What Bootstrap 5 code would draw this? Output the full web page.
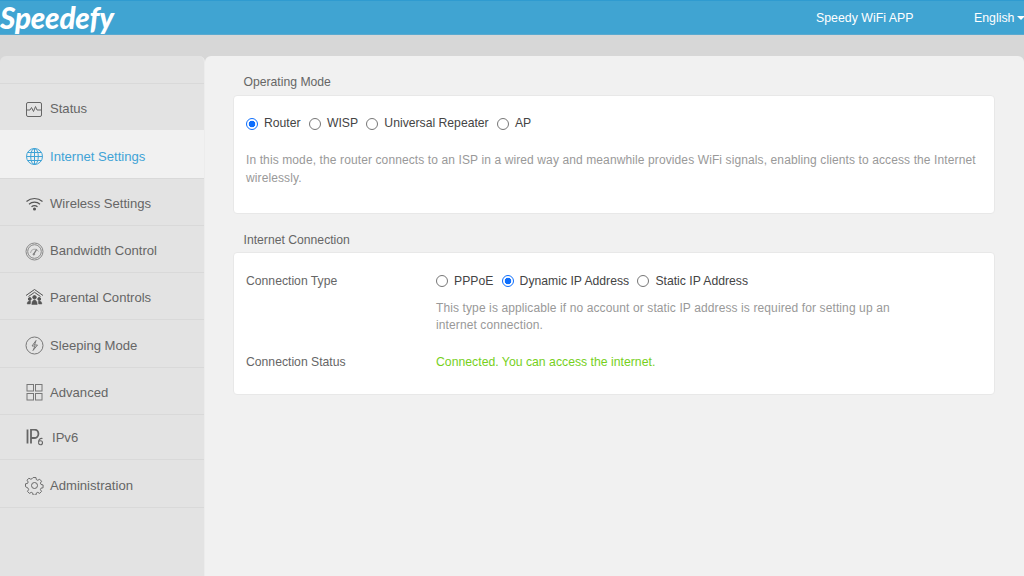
<!DOCTYPE html>
<html lang="en">
<head>
<meta charset="utf-8">
<title>Speedefy</title>
<link href="https://cdn.jsdelivr.net/npm/bootstrap@5.3.0/dist/css/bootstrap.min.css" rel="stylesheet">
<style>
html,body{height:100%;}
body{margin:0;background:#d7d7d7;font-family:"Liberation Sans",Arial,sans-serif;font-size:13px;color:#666;overflow:hidden;}
.top-bar{height:35px;background:#40a4d2;border-top:1px solid #2f9bd0;border-bottom:1px solid #5aa9cf;color:#fff;}
.brand-logo{font-family:"Lato",sans-serif;font-weight:900;font-style:italic;font-size:29.6px;line-height:33px;letter-spacing:-.2px;color:#fff;}
.app-link{width:97px;margin-right:61px;font-size:12.35px;white-space:nowrap;padding-top:1px;}
.lang-link{width:50px;font-size:12.35px;white-space:nowrap;padding-top:1px;}
.lang-caret{display:inline-block;border-left:4px solid transparent;border-right:4px solid transparent;border-top:4px solid #fff;vertical-align:2px;margin-left:2px;}
.page-body{height:541px;padding-top:21px;}
.side-panel{width:205px;background:#e3e3e3;border-right:1px solid #ececec;border-radius:6px 6px 0 0;padding-top:27px;flex:none;}
.side-item{height:47.3px;display:flex;align-items:center;padding-left:25px;padding-top:4px;border-top:1px solid #d9d9d9;color:#666;font-size:13.1px;text-decoration:none;box-sizing:border-box;}
.side-item:last-child{border-bottom:1px solid #d9d9d9;height:48.5px;}
.side-item.active-item{background:#f1f1f1;color:#3fa3d6;border-top-color:#f1f1f1;}
.side-item.tight-item{padding-top:3px;}
.side-item svg{width:19px;height:19px;flex:none;margin-right:6px;}
.side-item.short-item{height:45px;padding-top:2px;}
.main-panel{background:#f1f1f1;border-radius:6px 6px 0 0;padding:0 29px 0 28px;}
.sect-title{height:39px;padding:19px 0 0 10.5px;line-height:15px;color:#666;font-size:12.2px;}
.sect-title.second{height:38px;padding-top:18.5px;}
.white-box{background:#fff;border:1px solid #e8e8e8;border-radius:4px;padding:0 12px;}
.box-a{height:119px;padding-top:19px;}
.box-b{height:143px;padding-top:19px;}
.opt-row{height:17px;color:#444;font-size:12.2px;}
.box-b .opt-row{padding-top:1px;}
.opt-row .form-check-input{width:12px;height:12px;margin:0 6px 0 0;border:1px solid #767676;flex:none;}
.opt-row .form-check-input:checked{background:radial-gradient(circle,#0d6efd 0 3px,#fff 3.6px);border-color:#0d6efd;}
.opt-row label{margin-right:8.3px;white-space:nowrap;}
.note-text{color:#999;font-size:12px;line-height:17.3px;letter-spacing:.11px;}
.box-a .note-text{margin-top:20px;line-height:17.6px;}
.field-name{width:190px;flex:none;color:#666;font-size:12.2px;}
.field-value{width:470px;}
.conn-note{margin-top:10.5px;}
.status-row{margin-top:19px;}
.ok-text{color:#76d01c;font-size:12.25px;}
</style>
</head>
<body>
<div class="top-bar d-flex align-items-center">
  <div class="brand-logo flex-grow-1">Speedefy</div>
  <div class="app-link">Speedy WiFi APP</div>
  <div class="lang-link">English<span class="lang-caret"></span></div>
</div>
<div class="page-body d-flex">
  <nav class="side-panel">
    <a class="side-item" href="#"><svg viewBox="0 0 19 19" fill="none" stroke="#666" stroke-width="1"><rect x="1.5" y="2.5" width="15" height="14" rx="1.5"/><path d="M2 10h3l1.5-2.5 2 4 2-5 1.5 3.500H16"/></svg>Status</a>
    <a class="side-item active-item" href="#"><svg viewBox="0 0 19 19" fill="none" stroke="#3fa3d6" stroke-width="1"><circle cx="9.500" cy="9.500" r="8"/><ellipse cx="9.500" cy="9.500" rx="3.800" ry="8"/><path d="M9.500 1.500v16M1.500 9.500h16M2.600 5.500h13.800M2.600 13.500h13.800"/></svg>Internet Settings</a>
    <a class="side-item" href="#"><svg viewBox="0 0 19 19" fill="none" stroke="#555" stroke-width="1.200"><path d="M1.500 7.500c4.600-4 11.400-4 16 0M4 10.200c3.200-2.700 7.800-2.700 11 0M6.500 12.800c1.800-1.400 4.200-1.400 6 0"/><circle cx="9.500" cy="15" r=".9" fill="#555"/></svg>Wireless Settings</a>
    <a class="side-item" href="#"><svg viewBox="0 0 19 19" fill="none" stroke="#888" stroke-width="1"><circle cx="9.500" cy="9.500" r="8.500"/><circle cx="9.500" cy="9.500" r="6.800"/><path d="M5.500 11a4.200 4.200 0 0 1 8-1.500" stroke="#aaa"/><path d="M8.800 12l2.800-4.500" stroke-width="1.300" stroke="#777"/><circle cx="8.800" cy="12.300" r=".8" fill="#777"/></svg>Bandwidth Control</a>
    <a class="side-item tight-item" href="#"><svg viewBox="0 0 19 19" fill="#555" stroke="#555" stroke-width="1"><path d="M1 7.500 9.500 1.500 18 7.500M3.500 8.500 9.500 4.300 15.500 8.500" fill="none"/><circle cx="9.500" cy="9.300" r="1.700"/><circle cx="4.800" cy="11" r="1.400"/><circle cx="14.200" cy="11" r="1.400"/><path d="M6.800 16.500c0-2.800 1.200-4.500 2.700-4.500s2.700 1.700 2.700 4.500zM2.200 16c0-2 .9-3 2.400-3 .6 0 1 .2 1.300.5-.4.700-.6 1.500-.6 2.500zM16.800 16c0-2-.9-3-2.400-3-.6 0-1 .2-1.300.5.400.700.6 1.500.6 2.500z" stroke-width=".5"/></svg>Parental Controls</a>
    <a class="side-item" href="#"><svg viewBox="0 0 19 19" fill="none" stroke="#777" stroke-width="1"><circle cx="9.500" cy="9.500" r="8.500"/><path d="M11 4.500 7 10h3l-2 4.500 4.500-5.500h-3z"/></svg>Sleeping Mode</a>
    <a class="side-item" href="#"><svg viewBox="0 0 19 19" fill="none" stroke="#777" stroke-width="1"><rect x="2" y="1.500" width="6.500" height="6.500"/><rect x="10.500" y="1.500" width="6.500" height="6.500"/><rect x="2" y="10.500" width="6.500" height="6.500"/><rect x="10.500" y="10.500" width="6.500" height="6.500"/></svg>Advanced</a>
    <a class="side-item short-item" href="#"><svg viewBox="0 0 19 19" fill="none" stroke="#666" stroke-width="1.800" class="me-2"><path d="M2.500 .5v14M6 14.500V.5h3.200a3.500 3.500 0 0 1 0 8.500H6"/><path d="M17.500 9.500c-2.800-.5-4 1.700-4 3.800 0 1.500.8 2.500 2 2.500s2-.9 2-2-.8-2-2-2-1.900.7-2 1.300" stroke-width="1.100"/></svg>IPv6</a>
    <a class="side-item" href="#"><svg viewBox="0 0 19 19" fill="none" stroke="#666" stroke-width="1"><circle cx="9.500" cy="9.500" r="3"/><path d="M8 1.500h3l.4 2.200 1.500.7 2-1.100 2 2.100-1.200 1.900.6 1.500 2.200.5v3l-2.200.4-.6 1.500 1.200 1.900-2 2.100-2-1.100-1.500.7-.4 2.200H8l-.4-2.200-1.500-.7-2 1.100-2-2.100 1.200-1.900-.6-1.500L0 11.100v-3l2.200-.4.600-1.500L1.600 4.300l2-2.100 2 1.100 1.500-.7z" transform="translate(.5 .1) scale(.95)"/></svg>Administration</a>
  </nav>
  <main class="main-panel flex-grow-1">
    <div class="sect-title">Operating Mode</div>
    <div class="white-box box-a">
      <div class="opt-row d-flex align-items-center">
        <input class="form-check-input" type="radio" name="opmode" id="m1" checked><label for="m1">Router</label>
        <input class="form-check-input" type="radio" name="opmode" id="m2"><label for="m2">WISP</label>
        <input class="form-check-input" type="radio" name="opmode" id="m3"><label for="m3">Universal Repeater</label>
        <input class="form-check-input" type="radio" name="opmode" id="m4"><label for="m4">AP</label>
      </div>
      <p class="note-text mb-0">In this mode, the router connects to an ISP in a wired way and meanwhile provides WiFi signals, enabling clients to access the Internet wirelessly.</p>
    </div>
    <div class="sect-title second">Internet Connection</div>
    <div class="white-box box-b">
      <div class="d-flex">
        <div class="field-name">Connection Type</div>
        <div class="field-value">
          <div class="opt-row d-flex align-items-center">
            <input class="form-check-input" type="radio" name="conn" id="c1"><label for="c1">PPPoE</label>
            <input class="form-check-input" type="radio" name="conn" id="c2" checked><label for="c2">Dynamic IP Address</label>
            <input class="form-check-input" type="radio" name="conn" id="c3"><label for="c3">Static IP Address</label>
          </div>
          <p class="note-text mb-0 conn-note">This type is applicable if no account or static IP address is required for setting up an internet connection.</p>
        </div>
      </div>
      <div class="d-flex status-row">
        <div class="field-name">Connection Status</div>
        <div class="ok-text">Connected. You can access the internet.</div>
      </div>
    </div>
  </main>
</div>
</body>
</html>
